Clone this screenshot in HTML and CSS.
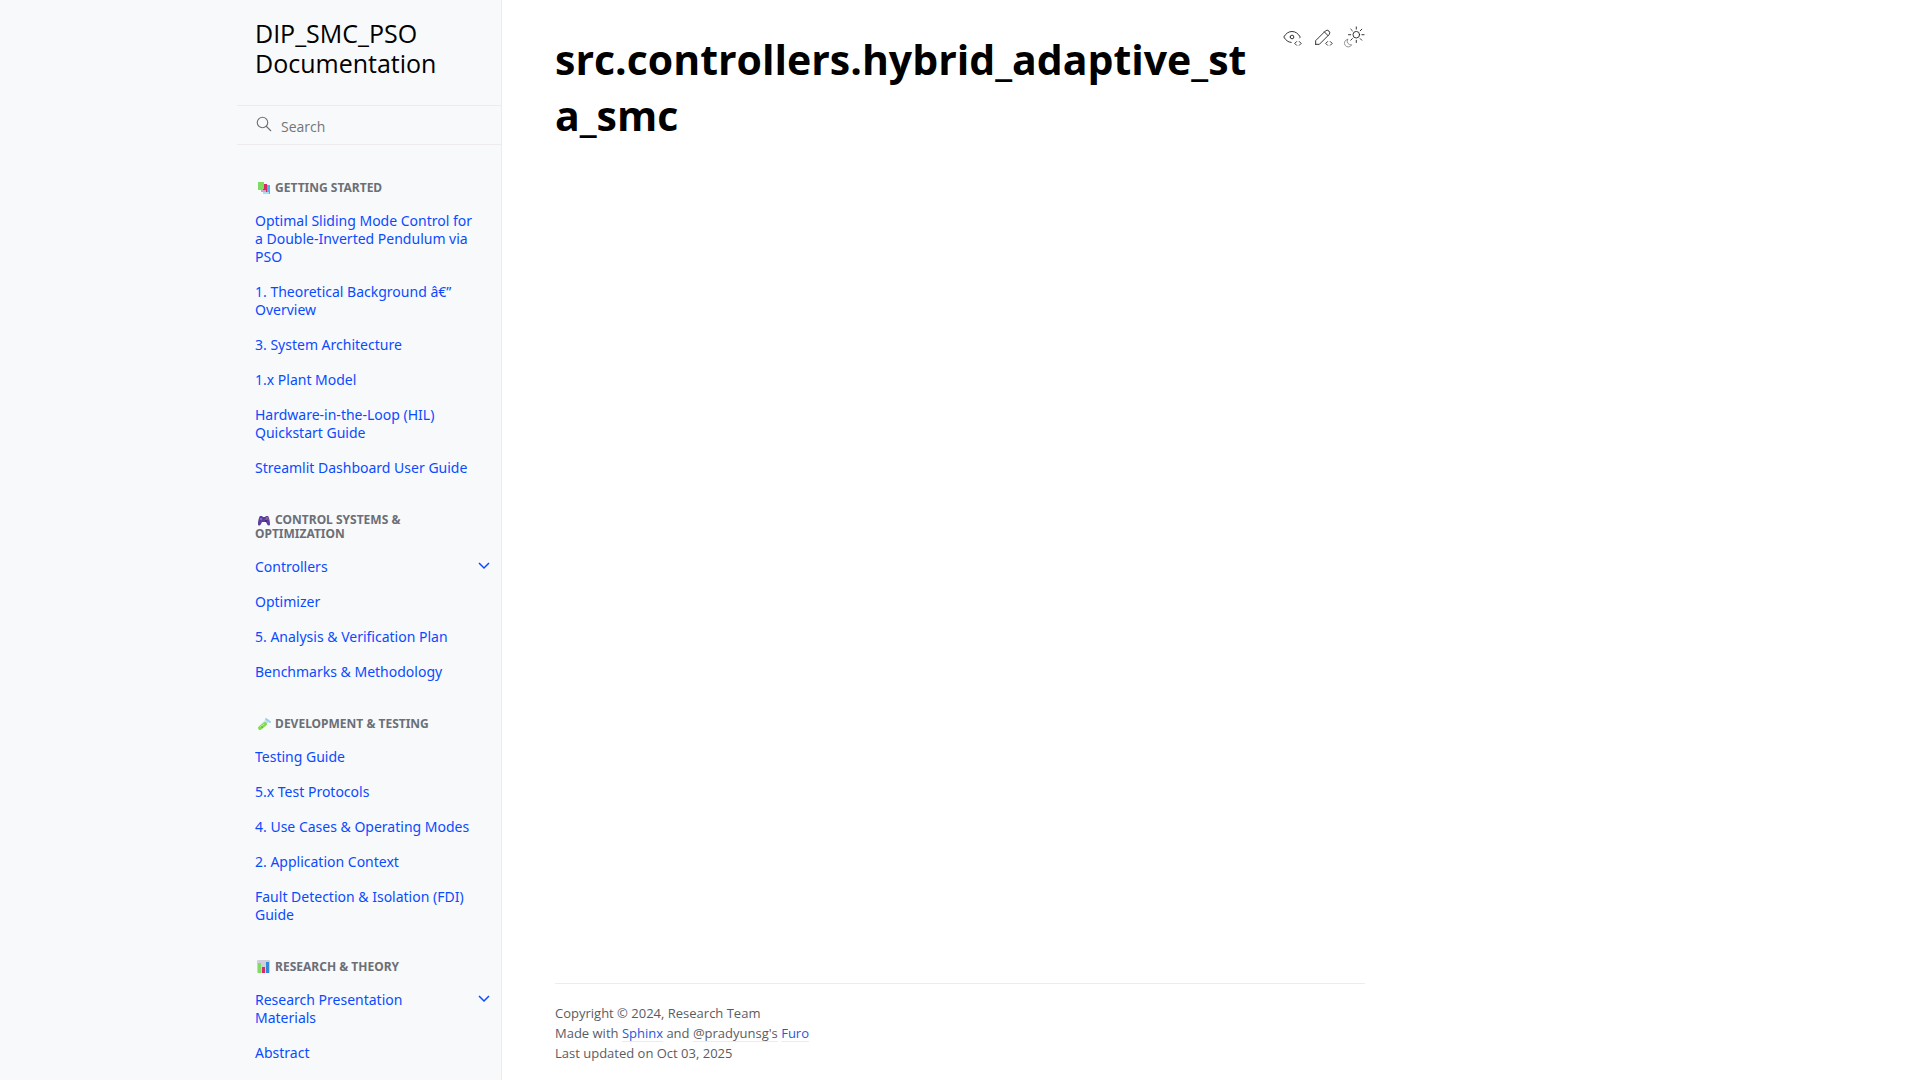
FILE: index.html
```html
<!DOCTYPE html>
<html lang="en">
<head>
<meta charset="utf-8">
<meta name="viewport" content="width=device-width, initial-scale=1">
<title>src.controllers.hybrid_adaptive_sta_smc</title>
<link rel="stylesheet" href="styles.css">
</head>
<body>
<div class="page">
  <aside class="sidebar">
    <div class="sidebar-inner">
      <a class="brand" href="#">DIP_SMC_PSO Documentation</a>
      <form class="search" role="search">
        <label class="search-label" for="q" aria-label="Search">
          <svg class="search-icon" viewBox="0 0 24 24"><circle cx="10" cy="10" r="7"/><path d="M21 21l-6-6"/></svg>
        </label>
        <input class="search-input" id="q" type="search" placeholder="Search">
      </form>
      <nav class="tree">
        <p class="caption"><svg class="emoji" viewBox="0 0 14 14"><path fill="#4db5f0" d="M7 4h6v9H7z"/><path fill="#a9dcf6" d="M6 11h6v2H6z"/><path fill="#d62861" d="M4 3h6v8H4z"/><path fill="#d9a1c8" d="M4 9h5v2H4z"/><path fill="#7edb62" d="M1 1h6v7H1z"/><path fill="#b5adc4" d="M1 8h5v1H1z"/></svg> Getting Started</p>
        <ul>
          <li><a href="#">Optimal Sliding Mode Control for a Double-Inverted Pendulum via PSO</a></li>
          <li><a href="#">1. Theoretical Background â€” Overview</a></li>
          <li><a href="#">3. System Architecture</a></li>
          <li><a href="#">1.x Plant Model</a></li>
          <li><a href="#">Hardware-in-the-Loop (HIL) Quickstart Guide</a></li>
          <li><a href="#">Streamlit Dashboard User Guide</a></li>
        </ul>
        <p class="caption"><svg class="emoji" viewBox="0 0 14 14"><path fill="#5b3fa0" d="M3 3h2l1 1h2l1-1h2c1 1 2 5 2 8 0 2-2 2-3 0L9 9H5l-1 2c-1 2-3 2-3 0 0-3 1-7 2-8z"/><circle cx="4" cy="6" r="1" fill="#8f7ad0"/><circle cx="9" cy="8" r="1" fill="#352a68"/><circle cx="10" cy="5" r=".7" fill="#e3b33c"/><circle cx="11.3" cy="6.2" r=".6" fill="#df4b6c"/><circle cx="9" cy="6.3" r=".6" fill="#4ba8e8"/></svg> Control Systems &amp; Optimization</p>
        <ul>
          <li><a href="#">Controllers</a><button class="toggle" type="button" aria-label="Toggle Controllers"><svg viewBox="0 0 12 12"><path d="M1 3l5 5 5-5"/></svg></button></li>
          <li><a href="#">Optimizer</a></li>
          <li><a href="#">5. Analysis &amp; Verification Plan</a></li>
          <li><a href="#">Benchmarks &amp; Methodology</a></li>
        </ul>
        <p class="caption"><svg class="emoji" viewBox="0 0 14 14"><path stroke="#c6e6f6" stroke-width="4" stroke-linecap="round" d="M4 10l6-6"/><path stroke="#83dc48" stroke-width="4" stroke-linecap="round" d="M3 11l5-4"/><path stroke="#c2f07c" stroke-width="1" d="M3 10l4-3"/><path stroke="#9dcdeb" stroke-width="2" stroke-linecap="round" d="M9 2l4 3"/><circle cx="5" cy="10" r=".7" fill="#3a9d33"/></svg> Development &amp; Testing</p>
        <ul>
          <li><a href="#">Testing Guide</a></li>
          <li><a href="#">5.x Test Protocols</a></li>
          <li><a href="#">4. Use Cases &amp; Operating Modes</a></li>
          <li><a href="#">2. Application Context</a></li>
          <li><a href="#">Fault Detection &amp; Isolation (FDI) Guide</a></li>
        </ul>
        <p class="caption"><svg class="emoji" viewBox="0 0 14 14"><rect x="0" y="0" width="13" height="13" rx="1" fill="#d0cedb"/><path fill="#7fdd65" d="M1 3h3v10H1z"/><path fill="#d32d68" d="M5 7h3v6H5z"/><path fill="#3488d8" d="M9 2h3v11H9z"/></svg> Research &amp; Theory</p>
        <ul>
          <li><a href="#">Research Presentation Materials</a><button class="toggle" type="button" aria-label="Toggle Research Presentation Materials"><svg viewBox="0 0 12 12"><path d="M1 3l5 5 5-5"/></svg></button></li>
          <li><a href="#">Abstract</a></li>
        </ul>
      </nav>
    </div>
  </aside>
  <div class="content">
    <main class="article">
      <h1>src.controllers.hybrid_adaptive_sta_smc</h1>
      <div class="actions">
        <a href="#" aria-label="View this page"><svg viewBox="0 0 24 24"><path d="M10 12a2 2 0 1 0 4 0a2 2 0 0 0-4 0"/><path d="M11.11 17.958c-3.209-.307-5.91-2.293-8.11-5.958c2.4-4 5.4-6 9-6c3.6 0 6.6 2 9 6c-.21.352-.427.688-.647 1.008"/><path d="M20 21l2-2l-2-2M17 17l-2 2l2 2"/></svg></a>
        <a href="#" aria-label="Edit this page"><svg viewBox="0 0 24 24"><path d="M4 20h4l10.5-10.5a2.828 2.828 0 1 0-4-4l-10.5 10.5v4M13.5 6.5l4 4"/><path d="M20 21l2-2l-2-2M17 17l-2 2l2 2"/></svg></a>
        <button type="button" aria-label="Toggle light and dark theme"><svg viewBox="0 0 24 24"><circle cx="14.5" cy="9.5" r="3.6"/><path d="M14.5 1v2.4M14.5 15.6V18M6 9.5h2.4M20.6 9.5H23M8.5 3.5l1.7 1.7M18.8 13.8l1.7 1.7M8.5 15.5l1.7-1.7M18.8 5.2l1.7-1.7"/><path class="moon" d="M5 14.5a4.2 4.2 0 1 0 4.5 6a4.2 4.2 0 0 1-4.5-6z"/></svg></button>
      </div>
    </main>
    <footer class="footer">
      <div>Copyright © 2024, Research Team</div>
      <div>Made with <a href="#">Sphinx</a> and <a class="muted" href="#">@pradyunsg's</a> <a href="#">Furo</a></div>
      <div>Last updated on Oct 03, 2025</div>
    </footer>
  </div>
</div>
</body>
</html>
```
FILE: styles.css
```css
* { box-sizing: border-box; }

body {
  margin: 0;
  background: #fff;
  color: #000;
  font-family: "Segoe UI", "Open Sans", "Noto Sans", sans-serif;
  font-size: 16px;
}

a { color: #0a4bff; text-decoration: none; }
button { padding: 0; border: 0; background: none; color: inherit; cursor: pointer; }
svg { fill: none; }

.page { display: flex; min-height: 100vh; }

/* Sidebar */
.sidebar {
  display: flex;
  justify-content: flex-end;
  flex: none;
  position: sticky;
  top: 0;
  width: calc(50% - 458px);
  min-width: 265px;
  height: 100vh;
  overflow: hidden;
  background: #f8f9fb;
  border-right: 1px solid #eeebee;
}
.sidebar-inner { width: 264px; }
.brand {
  display: block;
  padding: 18px 18px 27px;
  color: #000;
  font-size: 25px;
  line-height: 30px;
}
.search {
  display: flex;
  align-items: center;
  height: 40px;
  border-top: 1px solid #eeebee;
  border-bottom: 1px solid #eeebee;
}
.search-label { padding: 0 8px 2px 18px; line-height: 0; }
.search-icon { width: 18px; height: 18px; stroke: #6b6f76; stroke-width: 1.5; stroke-linecap: round; }
.search-input {
  flex: 1;
  min-width: 0;
  padding: 2px 0 0;
  border: 0;
  outline: 0;
  background: none;
  font: inherit;
  font-size: 14px;
}
.search-input::placeholder { color: #757575; }

.tree { padding-top: 9px; font-family: "Segoe UI", "Noto Sans", sans-serif; }
.tree ul { margin: 0; padding: 0; list-style: none; }
.tree li { display: flex; align-items: flex-start; }
.tree li a {
  flex: 1;
  padding: 8px 20px 9px 18px;
  font-size: 14px;
  line-height: 18px;
}
.caption {
  margin: 27px 18px 9px;
  color: #6b6f76;
  font-size: 12px;
  font-weight: 700;
  line-height: 14px;
  text-transform: uppercase;
}
.emoji { width: 14px; height: 14px; margin: 0 1px 0 2px; vertical-align: -3px; }
.toggle { width: 35px; height: 35px; }
.toggle svg { width: 12px; height: 12px; stroke: #0a4bff; stroke-width: 1.5; }

/* Content */
.content {
  display: flex;
  flex-direction: column;
  flex: 1;
  min-width: 0;
  max-width: 916px;
  padding: 0 53px;
}
.article { display: flex; align-items: flex-start; flex: 1; gap: 32px; }
h1 {
  flex: 1;
  min-width: 0;
  margin: 31px 0 0;
  font-size: 41px;
  font-weight: 700;
  line-height: 56px;
  overflow-wrap: anywhere;
}
.actions { display: flex; gap: 9px; padding-top: 26px; }
.actions svg {
  display: block;
  width: 22px;
  height: 22px;
  stroke: #222;
  stroke-width: 1;
  stroke-linecap: round;
  stroke-linejoin: round;
}
.actions .moon { stroke: #888; }

.footer {
  padding: 19px 0 17px;
  border-top: 1px solid #eeebee;
  color: #5a5c63;
  font-size: 13px;
  line-height: 20px;
}
.footer a { color: #2757dd; text-decoration: underline; text-decoration-color: #eeebee; text-underline-offset: 3px; }
.footer .muted { color: inherit; }
```
